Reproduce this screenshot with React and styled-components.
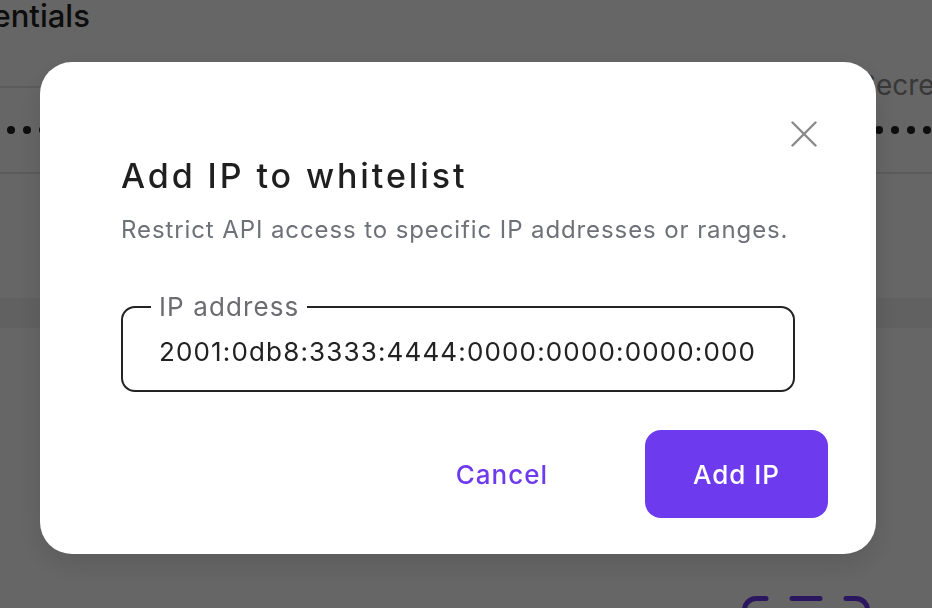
import React from "react";
import styled, { createGlobalStyle } from "styled-components";

const GlobalStyle = createGlobalStyle`
  html, body {
    margin: 0;
    padding: 0;
    overflow: hidden;
    background: #ffffff;
    font-family: Inter, "Noto Sans", "Liberation Sans", sans-serif;
  }
  * { box-sizing: border-box; }
`;

/* ---------- background page ---------- */

const Page = styled.div`
  height: 100vh;
  overflow: hidden;
  background: #ffffff;
  display: flex;
  flex-direction: column;
`;

const PageTitle = styled.h1`
  margin: 0 0 0 -79px;
  font-size: 31px;
  line-height: 32px;
  font-weight: 500;
  color: #222222;
  white-space: nowrap;
`;

const CredTable = styled.div`
  margin-top: 16px;
  display: grid;
  grid-template-columns: 858px 1fr;
  grid-template-rows: 40px 86px;
`;

const HeadCell = styled.div`
  border-bottom: ${(p) => (p.$ruled ? "2px solid #e4e4e4" : "none")};
  padding-top: 22px;
  font-size: 28px;
  line-height: 30px;
  color: #8c8c8c;
  white-space: nowrap;
`;

const BodyCell = styled.div`
  border-bottom: 2px solid #e4e4e4;
  display: flex;
  align-items: center;
  gap: 8px;
  padding-left: ${(p) => p.$indent}px;
  overflow: hidden;
`;

const Dot = styled.span`
  flex: none;
  width: 8px;
  height: 8px;
  border-radius: 50%;
  background: #222222;
`;

const Band = styled.div`
  margin-top: 124px;
  height: 32px;
  background: #f3f3f3;
`;

const IconRow = styled.div`
  margin-top: 266px;
  display: flex;
  padding-left: 740px;
`;

/* ---------- modal ---------- */

const Overlay = styled.div`
  position: fixed;
  inset: 0;
  background: rgba(0, 0, 0, 0.6);
  display: flex;
  align-items: flex-start;
  justify-content: flex-start;
  padding: 62px 0 0 40px;
`;

const Modal = styled.div`
  width: 836px;
  height: 492px;
  background: #ffffff;
  border-radius: 32px;
  box-shadow: 0 10px 30px rgba(0, 0, 0, 0.12);
  padding: 48px 48px 36px 81px;
  display: flex;
  flex-direction: column;
`;

const CloseRow = styled.div`
  display: flex;
  justify-content: flex-end;
  height: 48px;
`;

const CloseButton = styled.button`
  width: 48px;
  height: 48px;
  border: none;
  background: transparent;
  padding: 0;
  display: flex;
  align-items: center;
  justify-content: center;
  cursor: pointer;
`;

const Title = styled.h2`
  margin: -2px 0 0 0;
  font-size: 34px;
  line-height: 40px;
  font-weight: 500;
  letter-spacing: 2.9px;
  color: #1f1f1f;
  white-space: nowrap;
`;

const Subtitle = styled.p`
  margin: 18px 0 0 0;
  font-size: 24px;
  line-height: 32px;
  letter-spacing: 0.9px;
  color: #6f7179;
  white-space: nowrap;
`;

const Field = styled.fieldset`
  margin: 48px 0 0 0;
  width: 674px;
  border: 2px solid #232323;
  border-radius: 14px;
  padding: 0 36px 0 36px;
  min-width: 0;
`;

const Legend = styled.legend`
  margin-left: -8px;
  padding: 0 8px;
  font-size: 26px;
  line-height: 26px;
  letter-spacing: 1.1px;
  color: #6b6b70;
`;

const Input = styled.input`
  display: block;
  width: 100%;
  height: 70px;
  border: none;
  outline: none;
  background: transparent;
  padding: 0 0 8px 0;
  font-family: inherit;
  font-size: 26px;
  letter-spacing: 1.15px;
  color: #222222;
`;

const Actions = styled.div`
  margin-top: auto;
  display: flex;
  justify-content: flex-end;
  align-items: center;
  gap: 73px;
`;

const Button = styled.button`
  height: 88px;
  border: none;
  border-radius: 16px;
  font-family: inherit;
  font-size: 26px;
  font-weight: 500;
  letter-spacing: 1px;
  cursor: pointer;
  padding: 0 ${(p) => (p.$primary ? "0" : "24px")};
  width: ${(p) => (p.$primary ? "183px" : "auto")};
  background: ${(p) => (p.$primary ? "#6d3aee" : "transparent")};
  color: ${(p) => (p.$primary ? "#ffffff" : "#6d3aee")};
`;

const dots = (n) => Array.from({ length: n }, (_, i) => <Dot key={i} />);

export default function App() {
  return (
    <>
      <GlobalStyle />
      <Page>
        <PageTitle>Credentials</PageTitle>
        <CredTable>
          <HeadCell $ruled />
          <HeadCell>Secret</HeadCell>
          <BodyCell $indent={7}>{dots(40)}</BodyCell>
          <BodyCell $indent={17}>{dots(8)}</BodyCell>
        </CredTable>
        <Band />
        <IconRow>
          <svg width="132" height="14" viewBox="0 0 132 14" fill="none" stroke="#6d3aee" strokeWidth="5" strokeLinecap="round">
            <path d="M4.5 24 V16 A11.5 11.5 0 0 1 16 4.5 H26" />
            <path d="M52 4.5 H80" />
            <path d="M106 4.5 H116 A11.5 11.5 0 0 1 127.5 16 V24" />
          </svg>
        </IconRow>
      </Page>
      <Overlay>
        <Modal role="dialog" aria-labelledby="dlg-title">
          <CloseRow>
            <CloseButton aria-label="Close">
              <svg width="26" height="26" viewBox="0 0 26 26" fill="none" stroke="#8a8a8a" strokeWidth="2.4" strokeLinecap="round">
                <path d="M1.5 1.5 L24.5 24.5" />
                <path d="M24.5 1.5 L1.5 24.5" />
              </svg>
            </CloseButton>
          </CloseRow>
          <Title id="dlg-title">Add IP to whitelist</Title>
          <Subtitle>Restrict API access to specific IP addresses or ranges.</Subtitle>
          <Field>
            <Legend>IP address</Legend>
            <Input defaultValue="2001:0db8:3333:4444:0000:0000:0000:0000/64" />
          </Field>
          <Actions>
            <Button>Cancel</Button>
            <Button $primary>Add IP</Button>
          </Actions>
        </Modal>
      </Overlay>
    </>
  );
}
